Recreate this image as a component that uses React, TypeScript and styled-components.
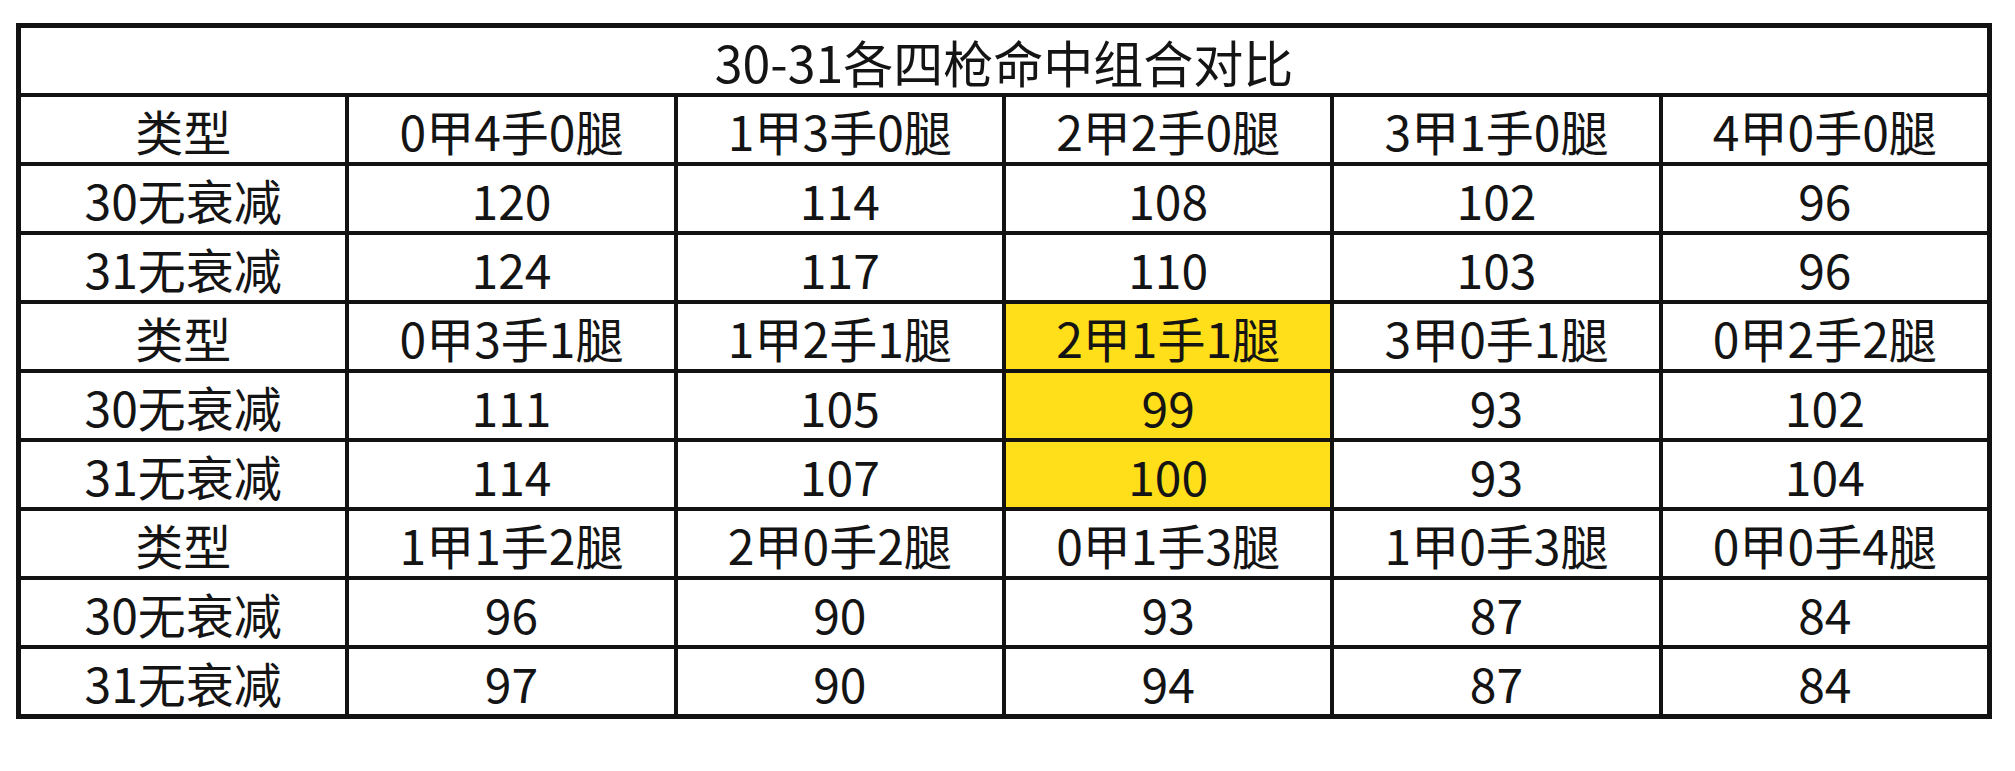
import React from "react";
import styled, { createGlobalStyle } from "styled-components";

const GlobalStyle = createGlobalStyle`
  html, body {
    margin: 0;
    padding: 0;
    background: #ffffff;
  }
  body {
    font-family: "Noto Sans CJK SC", "Noto Sans", sans-serif;
  }
`;

const Page = styled.div`
  width: 2015px;
  height: 771px;
  background: #ffffff;
  padding: 23px 0 0 16px;
  box-sizing: border-box;
`;

const Grid = styled.div`
  width: 1976px;
  box-sizing: border-box;
  display: grid;
  grid-template-columns: repeat(6, 1fr);
  grid-auto-rows: 65px;
  gap: 4px;
  padding: 5px;
  background: #121212;
`;

const Cell = styled.div<{ $hl?: boolean }>`
  background: ${(p) => (p.$hl ? "#FFDE1A" : "#ffffff")};
  display: flex;
  align-items: center;
  justify-content: center;
  font-family: "Noto Sans CJK SC", "Noto Sans", sans-serif;
  font-size: 48px;
  line-height: 1;
  color: #141414;
  white-space: nowrap;
`;

const TitleCell = styled(Cell)`
  grid-column: 1 / -1;
  font-size: 50px;
`;

type Group = {
  heads: string[];
  r30: (string | number)[];
  r31: (string | number)[];
  hl?: number;
};

const groups: Group[] = [
  {
    heads: ["0甲4手0腿", "1甲3手0腿", "2甲2手0腿", "3甲1手0腿", "4甲0手0腿"],
    r30: [120, 114, 108, 102, 96],
    r31: [124, 117, 110, 103, 96],
  },
  {
    heads: ["0甲3手1腿", "1甲2手1腿", "2甲1手1腿", "3甲0手1腿", "0甲2手2腿"],
    r30: [111, 105, 99, 93, 102],
    r31: [114, 107, 100, 93, 104],
    hl: 2,
  },
  {
    heads: ["1甲1手2腿", "2甲0手2腿", "0甲1手3腿", "1甲0手3腿", "0甲0手4腿"],
    r30: [96, 90, 93, 87, 84],
    r31: [97, 90, 94, 87, 84],
  },
];

export default function App() {
  return (
    <>
      <GlobalStyle />
      <Page>
        <Grid>
          <TitleCell>30-31各四枪命中组合对比</TitleCell>
          {groups.map((g, gi) => (
            <React.Fragment key={gi}>
              <Cell>类型</Cell>
              {g.heads.map((h, i) => (
                <Cell key={`h${i}`} $hl={g.hl === i}>
                  {h}
                </Cell>
              ))}
              <Cell>30无衰减</Cell>
              {g.r30.map((v, i) => (
                <Cell key={`a${i}`} $hl={g.hl === i}>
                  {v}
                </Cell>
              ))}
              <Cell>31无衰减</Cell>
              {g.r31.map((v, i) => (
                <Cell key={`b${i}`} $hl={g.hl === i}>
                  {v}
                </Cell>
              ))}
            </React.Fragment>
          ))}
        </Grid>
      </Page>
    </>
  );
}
